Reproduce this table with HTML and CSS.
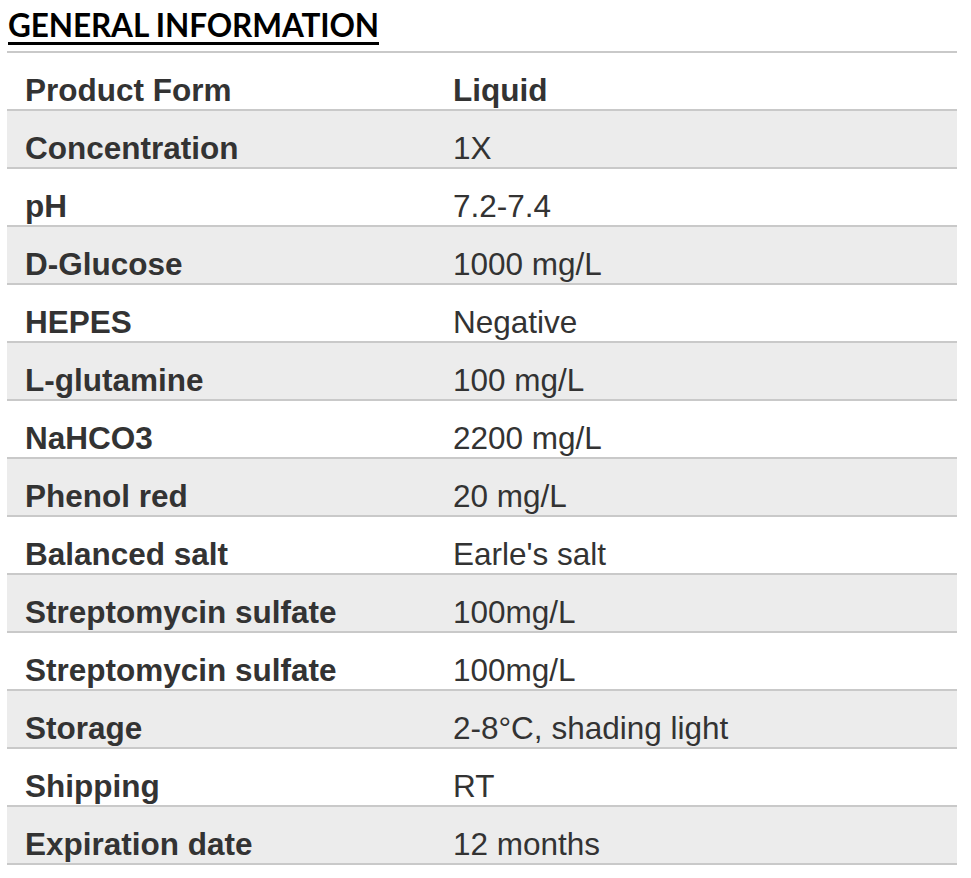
FILE: index.html
```html
<!DOCTYPE html>
<html>
<head>
<meta charset="utf-8">
<link rel="stylesheet" href="styles.css">
</head>
<body>
<div class="page">
  <h2 class="title">GENERAL INFORMATION</h2>
  <div class="spec">
    <div class="row"><div class="label">Product Form</div><div class="value strong">Liquid</div></div>
    <div class="row alt"><div class="label">Concentration</div><div class="value">1X</div></div>
    <div class="row"><div class="label">pH</div><div class="value">7.2-7.4</div></div>
    <div class="row alt"><div class="label">D-Glucose</div><div class="value">1000 mg/L</div></div>
    <div class="row"><div class="label">HEPES</div><div class="value">Negative</div></div>
    <div class="row alt"><div class="label">L-glutamine</div><div class="value">100 mg/L</div></div>
    <div class="row"><div class="label">NaHCO3</div><div class="value">2200 mg/L</div></div>
    <div class="row alt"><div class="label">Phenol red</div><div class="value">20 mg/L</div></div>
    <div class="row"><div class="label">Balanced salt</div><div class="value">Earle's salt</div></div>
    <div class="row alt"><div class="label">Streptomycin sulfate</div><div class="value">100mg/L</div></div>
    <div class="row"><div class="label">Streptomycin sulfate</div><div class="value">100mg/L</div></div>
    <div class="row alt"><div class="label">Storage</div><div class="value">2-8°C, shading light</div></div>
    <div class="row"><div class="label">Shipping</div><div class="value">RT</div></div>
    <div class="row alt"><div class="label">Expiration date</div><div class="value">12 months</div></div>
  </div>
</div>
</body>
</html>
```
FILE: styles.css
```css
html, body {
  margin: 0;
  padding: 0;
  background: #ffffff;
}
.page {
  padding: 0 14px 0 7px;
}
.title {
  margin: 0;
  padding: 7px 0 0 1px;
  height: 51px;
  box-sizing: border-box;
  font-family: Lato, "Open Sans", sans-serif;
  font-weight: 700;
  font-size: 31.5px;
  line-height: 36px;
  color: #000;
  text-decoration: underline;
  text-decoration-thickness: 3px;
  text-underline-offset: 5px;
  letter-spacing: -0.1px;
}
.spec {
  border-top: 2px solid #c9c9c9;
  width: 950px;
}
.row {
  display: grid;
  grid-template-columns: 428px 1fr;
  height: 58px;
  box-sizing: border-box;
  padding: 22px 0 0 18px;
  border-bottom: 2px solid #c9c9c9;
  font-family: "Liberation Sans", Arial, sans-serif;
  font-size: 31.5px;
  line-height: 31px;
  color: #333333;
}
.row.alt {
  background: #ececec;
}
.label {
  font-weight: 700;
}
.value {
  font-weight: 400;
}
.value.strong {
  font-weight: 700;
}
```
